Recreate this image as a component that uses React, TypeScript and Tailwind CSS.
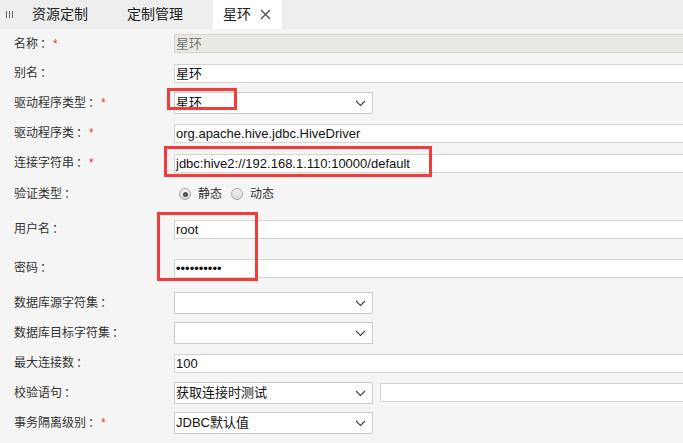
import type { ReactNode } from "react";

const cjk = "font-['Liberation_Sans','Noto_Sans_CJK_SC',sans-serif]";

const Label = ({ text, req }: { text: string; req?: boolean }) => (
  <div className="w-[170px] shrink-0 pl-[10px] text-[12px] leading-[16px] text-[#333]">
    {text}
    <span className="ml-[2px] mr-[1px]">：</span>
    {req && <span className="text-[#e5393b]">*</span>}
  </div>
);

const Row = ({ h, children }: { h: string; children: ReactNode }) => (
  <div className={`flex items-center ${h}`}>{children}</div>
);

const TextInput = ({ value, disabled, w = "w-[520px]" }: { value?: string; disabled?: boolean; w?: string }) => (
  <div
    className={`${w} h-[19px] shrink-0 border border-[#d6d4cd] px-[1px] text-[13px] leading-[17px] ${
      disabled ? "bg-[#eae9e3] text-[#777]" : "bg-white text-[#111]"
    }`}
  >
    {value}
  </div>
);

const Chevron = () => (
  <svg width="11" height="7" viewBox="0 0 11 7" className="shrink-0">
    <path d="M1 1 L5.5 5.5 L10 1" fill="none" stroke="#444" strokeWidth="1.2" />
  </svg>
);

const Select = ({ value }: { value?: string }) => (
  <div className="flex h-[22px] w-[199px] shrink-0 items-center justify-between border border-[#cfcdc7] bg-white pl-[1px] pr-[6px] text-[13px] text-[#111]">
    <span>{value}</span>
    <Chevron />
  </div>
);

const Radio = ({ checked }: { checked?: boolean }) => (
  <span className="flex h-[12px] w-[12px] items-center justify-center rounded-full border border-[#a9a9a9] bg-gradient-to-b from-[#f4f4f4] to-[#d8d8d8]">
    {checked && <span className="h-[5px] w-[5px] rounded-full bg-[#555]" />}
  </span>
);

const RedBox = ({ cls }: { cls: string }) => (
  <div className={`pointer-events-none absolute border-[3px] border-[#f23c3c] ${cls}`} />
);

export default function App() {
  return (
    <div className={`relative h-[443px] w-[683px] overflow-hidden bg-[#f5f5f5] ${cjk}`}>
      {/* tab bar */}
      <div className="flex h-[29px] items-stretch bg-[#eeeeee] text-[14px] text-[#222]">
        <div className="flex w-[32px] items-center pl-[6px]">
          <svg width="8" height="7" viewBox="0 0 8 7">
            <path d="M0.5 0 V7 M3.5 0 V7 M6.5 0 V7" stroke="#666" strokeWidth="1" />
          </svg>
        </div>
        <div className="flex w-[95px] items-center">资源定制</div>
        <div className="flex w-[86px] items-center">定制管理</div>
        <div className="flex w-[69px] items-center bg-white pl-[10px]">
          <span>星环</span>
          <svg width="11" height="11" viewBox="0 0 11 11" className="ml-[9px]">
            <path d="M1 1 L10 10 M10 1 L1 10" stroke="#555" strokeWidth="1.4" />
          </svg>
        </div>
      </div>

      {/* form */}
      <div className="pl-[4px]">
        <Row h="h-[29px]">
          <Label text="名称" req />
          <TextInput value="星环" disabled />
        </Row>
        <Row h="h-[30px]">
          <Label text="别名" />
          <TextInput value="星环" />
        </Row>
        <Row h="h-[30px]">
          <Label text="驱动程序类型" req />
          <Select value="星环" />
        </Row>
        <Row h="h-[30px]">
          <Label text="驱动程序类" req />
          <TextInput value="org.apache.hive.jdbc.HiveDriver" />
        </Row>
        <Row h="h-[30px]">
          <Label text="连接字符串" req />
          <TextInput value="jdbc:hive2://192.168.1.110:10000/default" />
        </Row>
        <Row h="h-[32px]">
          <Label text="验证类型" />
          <div className="flex items-center pl-[5px] text-[12px] text-[#333]">
            <Radio checked />
            <span className="ml-[7px]">静态</span>
            <span className="ml-[9px]">
              <Radio />
            </span>
            <span className="ml-[7px]">动态</span>
          </div>
        </Row>
        <Row h="h-[38px]">
          <Label text="用户名" />
          <TextInput value="root" />
        </Row>
        <Row h="h-[40px]">
          <Label text="密码" />
          <TextInput value={"\u2022".repeat(10)} />
        </Row>
        <Row h="h-[30px]">
          <Label text="数据库源字符集" />
          <Select />
        </Row>
        <Row h="h-[30px]">
          <Label text="数据库目标字符集" />
          <Select />
        </Row>
        <Row h="h-[30px]">
          <Label text="最大连接数" />
          <TextInput value="100" />
        </Row>
        <Row h="h-[30px]">
          <Label text="校验语句" />
          <Select value="获取连接时测试" />
          <div className="ml-[7px] -translate-y-[1px]">
            <TextInput w="w-[320px]" />
          </div>
        </Row>
        <Row h="h-[30px]">
          <Label text="事务隔离级别" req />
          <Select value="JDBC默认值" />
        </Row>
      </div>

      {/* annotation boxes */}
      <RedBox cls="left-[167px] top-[88px] h-[22px] w-[70px]" />
      <RedBox cls="left-[164px] top-[146px] h-[31px] w-[268px]" />
      <RedBox cls="left-[157px] top-[212px] h-[69px] w-[101px]" />
    </div>
  );
}
